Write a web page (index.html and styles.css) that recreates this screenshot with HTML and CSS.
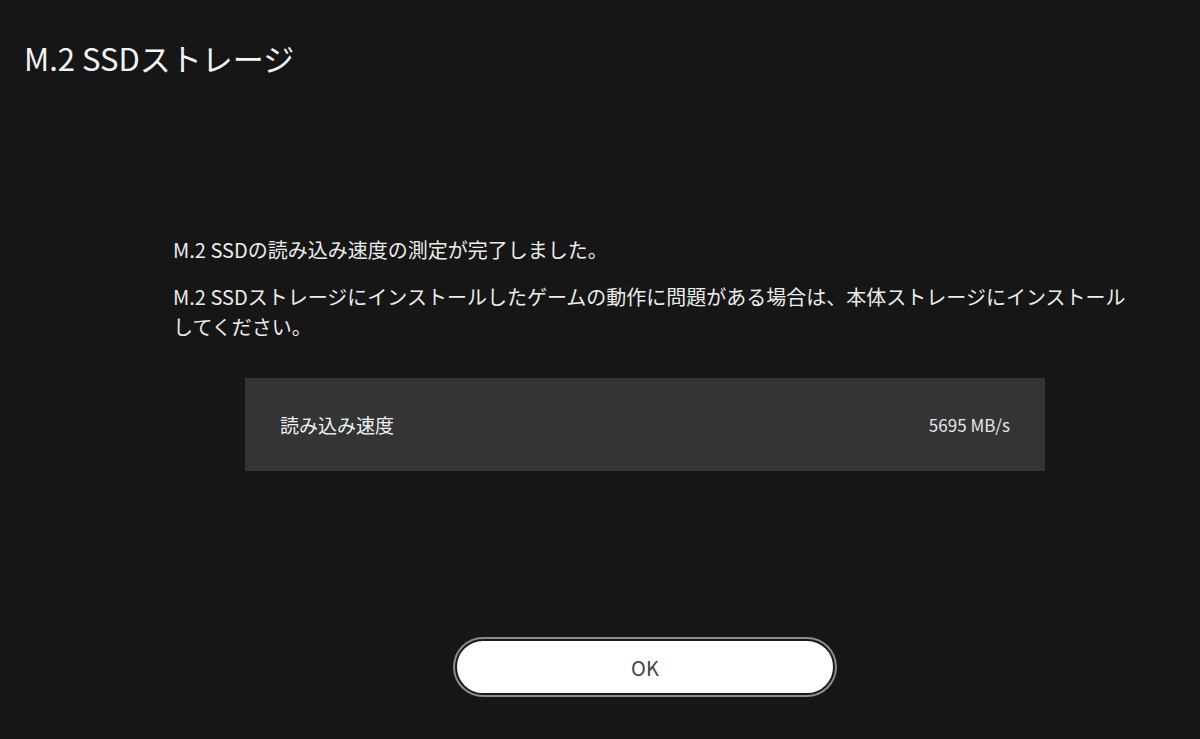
FILE: index.html
```html
<!DOCTYPE html>
<html lang="ja">
<head>
    <meta charset="UTF-8">
    <meta name="viewport" content="width=device-width, initial-scale=1.0">
    <title>M.2 SSDストレージ</title>
    <link rel="stylesheet" href="styles.css">
</head>
<body>
    <h1 class="title">M.2 SSDストレージ</h1>

    <div class="content">
        <p class="message">M.2 SSDの読み込み速度の測定が完了しました。</p>
        <p class="message">M.2 SSDストレージにインストールしたゲームの動作に問題がある場合は、本体ストレージにインストールしてください。</p>

        <div class="result">
            <span class="result-label">読み込み速度</span>
            <span class="result-value">5695 MB/s</span>
        </div>

        <div class="actions">
            <button class="ok-button">OK</button>
        </div>
    </div>
</body>
</html>
```

FILE: styles.css
```css
html, body {
    margin: 0;
    padding: 0;
    height: 739px;
    overflow: hidden;
}
body {
    background: #161616;
    color: #f2f2f2;
    font-family: "Noto Sans CJK JP", "Noto Sans", sans-serif;
}
.title {
    margin: 0;
    padding: 36px 24px 0;
    font-size: 31px;
    font-weight: 400;
    line-height: 44px;
    color: #f4f4f4;
}
.content {
    width: 944px;
    margin: 155px 0 0 173px;
}
.message {
    margin: 0 -18px 17px 0;
    font-size: 20px;
    line-height: 30px;
    color: #ececec;
}
.result {
    width: 800px;
    height: 93px;
    margin: 36px auto 0;
    padding: 0 35px;
    box-sizing: border-box;
    background: #333434;
    display: flex;
    align-items: center;
    justify-content: space-between;
}
.result-label {
    font-size: 19px;
    color: #f0f0f0;
}
.result-value {
    font-size: 17px;
    color: #e6e6e6;
}
.actions {
    display: flex;
    justify-content: center;
    margin-top: 168px;
}
.ok-button {
    width: 380px;
    height: 56px;
    border-radius: 28px;
    background: #fff;
    border: 2px solid #1a1a1a;
    box-shadow: 0 0 0 2px #8a8d90;
    color: #454545;
    font-family: inherit;
    font-size: 20px;
    cursor: pointer;
}
```
